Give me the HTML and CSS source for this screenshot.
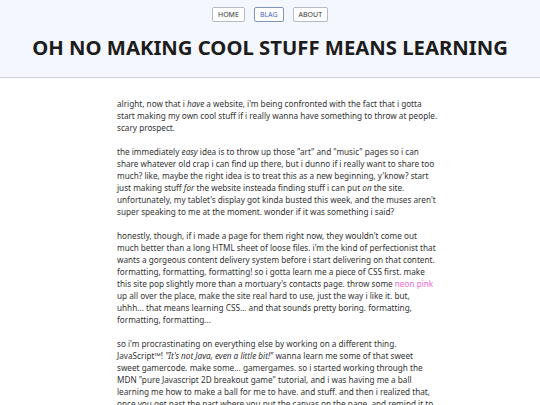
FILE: index.html
```
<!DOCTYPE html>
<html>
<head>
<meta charset="utf-8">
<link rel="stylesheet" href="styles.css">
</head>
<body>
<header class="site-header">
  <nav class="nav">
    <a class="nav-btn">HOME</a>
    <a class="nav-btn active">BLAG</a>
    <a class="nav-btn">ABOUT</a>
  </nav>
  <h1 class="title">OH NO MAKING COOL STUFF MEANS LEARNING</h1>
</header>
<main class="post">
  <p>alright, now that i <em>have</em> a website, i'm being confronted with the fact that i gotta start making my own cool stuff if i really wanna have something to throw at people. scary prospect.</p>
  <p>the immediately <em>easy</em> idea is to throw up those "art" and "music" pages so i can share whatever old crap i can find up there, but i dunno if i really want to share too much? like, maybe the right idea is to treat this as a new beginning, y'know? start just making stuff <em>for</em> the website insteada finding stuff i can put <em>on</em> the site. unfortunately, my tablet's display got kinda busted this week, and the muses aren't super speaking to me at the moment. wonder if it was something i said?</p>
  <p>honestly, though, if i made a page for them right now, they wouldn't come out much better than a long HTML sheet of loose files. i'm the kind of perfectionist that wants a gorgeous content delivery system before i start delivering on that content. formatting, formatting, formatting! so i gotta learn me a piece of CSS first. make this site pop slightly more than a mortuary's contacts page. throw some <span class="pink">neon pink</span> up all over the place, make the site real hard to use, just the way i like it. but, uhhh... that means learning CSS... and that sounds pretty boring. formatting, formatting, formatting...</p>
  <p>so i'm procrastinating on everything else by working on a different thing. JavaScript™! <em>"It's not Java, even a little bit!"</em> wanna learn me some of that sweet sweet gamercode. make some... gamergames. so i started working through the MDN "pure Javascript 2D breakout game" tutorial, and i was having me a ball learning me how to make a ball for me to have. and stuff. and then i realized that, once you get past the part where you put the canvas on the page, and remind it to render every so and then, a lot of this junk is junk i did in, like, the childhood times. i already know how to make a ball bounce around.</p>
</main>
</body>
</html>
```
FILE: styles.css
```
html, body {
  margin: 0;
  padding: 0;
  background: #ffffff;
}
body {
  font-family: "Noto Sans", "Open Sans", sans-serif;
  color: #333333;
}
.site-header {
  background: #f4f7fd;
  border-bottom: 1px solid #c9ced8;
  height: 78px;
  box-sizing: border-box;
  padding-top: 7px;
  display: flex;
  flex-direction: column;
  align-items: center;
}
.nav {
  display: flex;
  gap: 9px;
}
.nav-btn {
  display: block;
  font-size: 7px;
  line-height: 13px;
  padding: 0 5px;
  border: 1px solid #b3bac8;
  border-radius: 2px;
  background: #ffffff;
  color: #333;
}
.nav-btn.active {
  color: #3f68b3;
  border-color: #7f95c0;
}
.title {
  margin: 11px 0 0 0;
  font-size: 20.3px;
  line-height: 28px;
  font-weight: 700;
  color: #1c1c1c;
  letter-spacing: 0;
}
.post {
  width: 320.5px;
  margin-left: 117px;
  padding-top: 20px;
}
.post p {
  font-size: 8.2px;
  line-height: 12px;
  margin: 0 0 12px 0;
}
.pink {
  color: #f06ad2;
}
```
